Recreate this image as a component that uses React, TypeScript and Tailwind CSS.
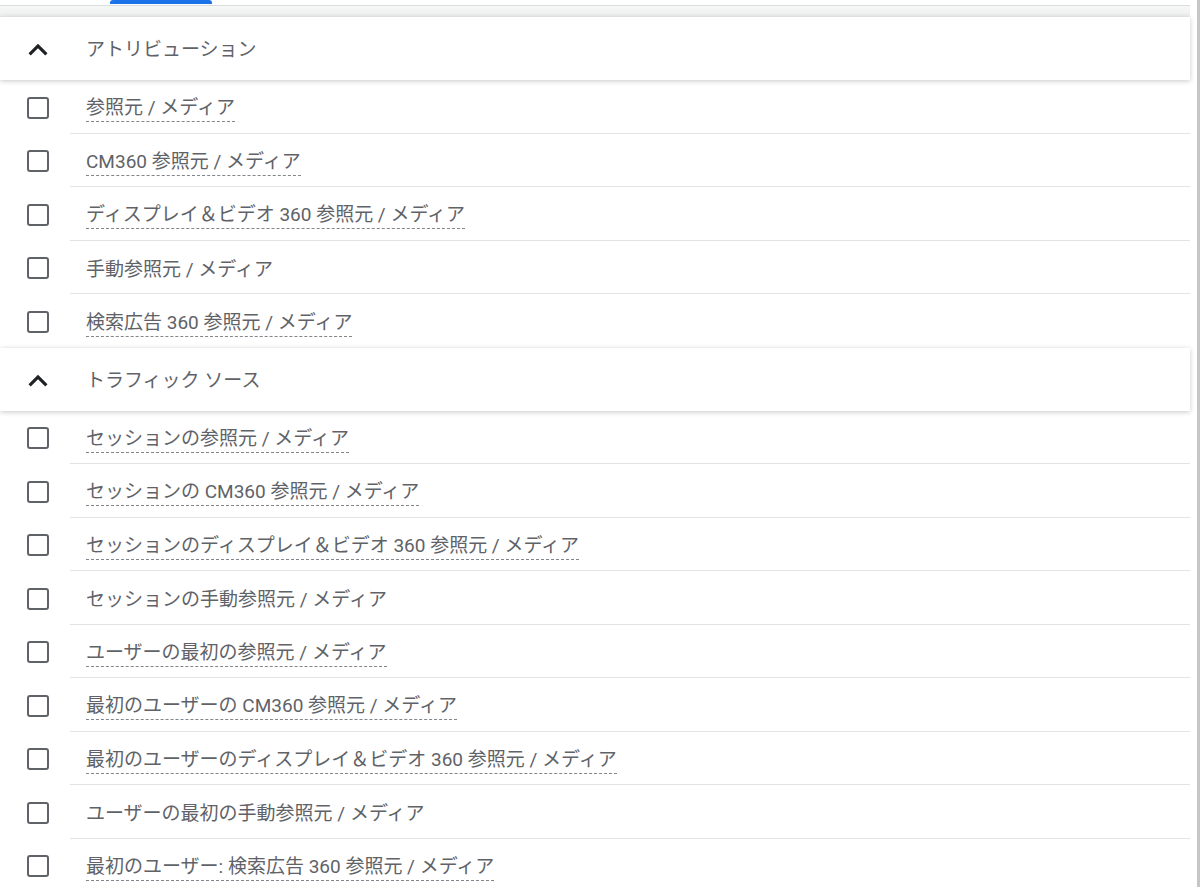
import React from 'react';

type Item = { label: string; dashed: boolean };

const attribution: Item[] = [
  { label: '参照元 / メディア', dashed: true },
  { label: 'CM360 参照元 / メディア', dashed: true },
  { label: 'ディスプレイ＆ビデオ 360 参照元 / メディア', dashed: true },
  { label: '手動参照元 / メディア', dashed: false },
  { label: '検索広告 360 参照元 / メディア', dashed: true },
];

const traffic: Item[] = [
  { label: 'セッションの参照元 / メディア', dashed: true },
  { label: 'セッションの CM360 参照元 / メディア', dashed: true },
  { label: 'セッションのディスプレイ＆ビデオ 360 参照元 / メディア', dashed: true },
  { label: 'セッションの手動参照元 / メディア', dashed: false },
  { label: 'ユーザーの最初の参照元 / メディア', dashed: true },
  { label: '最初のユーザーの CM360 参照元 / メディア', dashed: true },
  { label: '最初のユーザーのディスプレイ＆ビデオ 360 参照元 / メディア', dashed: true },
  { label: 'ユーザーの最初の手動参照元 / メディア', dashed: false },
  { label: '最初のユーザー: 検索広告 360 参照元 / メディア', dashed: true },
];

const Chevron = () => (
  <svg width="38" height="38" viewBox="0 0 24 24" className="text-[#202124] shrink-0">
    <path d="M7.41 15.41 12 10.83l4.59 4.58L18 14l-6-6-6 6z" fill="currentColor" />
  </svg>
);

const SectionHeader = ({ title }: { title: string }) => (
  <div className="relative z-10 h-[63px] shrink-0 flex items-center bg-white shadow-[0_1px_5px_rgba(0,0,0,0.22)]">
    <div className="w-[76px] pl-[19px] mt-[3px] flex items-center">
      <Chevron />
    </div>
    <span className="pl-[10px] mt-[4px] text-[19px] text-[#5f6368]">{title}</span>
  </div>
);

const Row = ({ item, last }: { item: Item; last: boolean }) => (
  <div className="h-[53.5px] shrink-0 flex items-center">
    <div className="w-[70px] h-full flex items-center pl-[27px] pt-[2px]">
      <div className="w-[22px] h-[22px] border-[2.5px] border-[#5f6368] rounded-[3px]" />
    </div>
    <div className={`flex-1 h-full flex items-center pl-[16px] ${last ? '' : 'border-b border-[#e3e3e3]'}`}>
      <span
        className={`mt-[6px] text-[19px] text-[#5f6368] leading-[24px] ${
          item.dashed ? 'border-b border-dashed border-[#80868b] pb-[1px]' : ''
        }`}
      >
        {item.label}
      </span>
    </div>
  </div>
);

const Section = ({ title, items }: { title: string; items: Item[] }) => (
  <div className="shrink-0">
    <SectionHeader title={title} />
    {items.map((item, i) => (
      <Row key={item.label} item={item} last={i === items.length - 1} />
    ))}
  </div>
);

export default function App() {
  return (
    <div
      className="w-[1200px] h-[887px] overflow-hidden bg-white flex"
      style={{ fontFamily: 'Roboto, "Noto Sans CJK JP", sans-serif' }}
    >
      <div className="w-[1190px] flex flex-col">
        <div className="h-[6px] shrink-0 border-b border-[#dadce0] relative">
          <div className="absolute left-[110px] top-0 w-[102px] h-[4px] bg-[#1a73e8] rounded-t-[3px]" />
        </div>
        <div className="h-[11px] shrink-0 bg-gradient-to-b from-[#f6f7f7] to-[#eeeeee]" />
        <Section title="アトリビューション" items={attribution} />
        <Section title="トラフィック ソース" items={traffic} />
      </div>
      <div className="w-[7px]" />
      <div className="w-[3px] bg-[#c6c6c6]" />
    </div>
  );
}
